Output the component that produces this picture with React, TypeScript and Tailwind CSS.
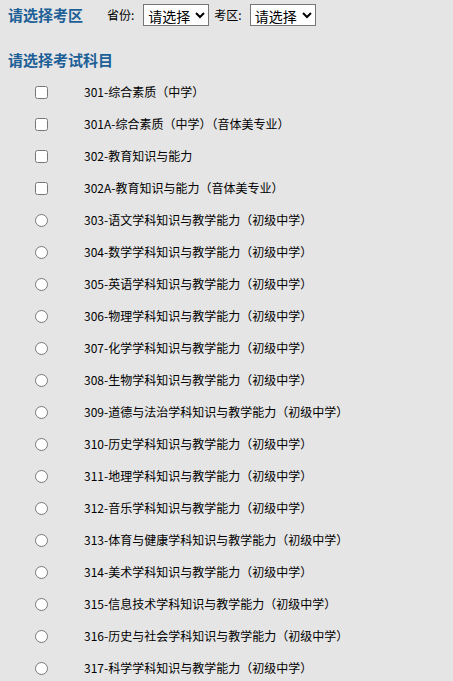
import React from "react";

const subjects: { label: string; multi?: boolean }[] = [
  { label: "301-综合素质（中学）", multi: true },
  { label: "301A-综合素质（中学）（音体美专业）", multi: true },
  { label: "302-教育知识与能力", multi: true },
  { label: "302A-教育知识与能力（音体美专业）", multi: true },
  { label: "303-语文学科知识与教学能力（初级中学）" },
  { label: "304-数学学科知识与教学能力（初级中学）" },
  { label: "305-英语学科知识与教学能力（初级中学）" },
  { label: "306-物理学科知识与教学能力（初级中学）" },
  { label: "307-化学学科知识与教学能力（初级中学）" },
  { label: "308-生物学科知识与教学能力（初级中学）" },
  { label: "309-道德与法治学科知识与教学能力（初级中学）" },
  { label: "310-历史学科知识与教学能力（初级中学）" },
  { label: "311-地理学科知识与教学能力（初级中学）" },
  { label: "312-音乐学科知识与教学能力（初级中学）" },
  { label: "313-体育与健康学科知识与教学能力（初级中学）" },
  { label: "314-美术学科知识与教学能力（初级中学）" },
  { label: "315-信息技术学科知识与教学能力（初级中学）" },
  { label: "316-历史与社会学科知识与教学能力（初级中学）" },
  { label: "317-科学学科知识与教学能力（初级中学）" },
];

const font = { fontFamily: '"Noto Sans CJK SC", "Liberation Sans", sans-serif' };

export default function App() {
  return (
    <div
      className="min-h-screen bg-[#e5e5e5] px-2 text-black"
      style={font}
    >
      {/* 考区 */}
      <div className="flex h-[30px] items-center">
        <span className="text-[15px] font-bold text-[#1d5f97]">请选择考区</span>
        <span className="ml-6 text-[12px]">省份:</span>
        <select className="ml-[9px] h-[22px] w-[66px] border border-[#767676] bg-white text-[14px]">
          <option>请选择</option>
        </select>
        <span className="ml-[5px] text-[12px]">考区:</span>
        <select className="ml-[8px] h-[22px] w-[66px] border border-[#767676] bg-white text-[14px]">
          <option>请选择</option>
        </select>
      </div>

      {/* 科目 */}
      <div className="mt-[14px] flex h-[32px] items-center">
        <span className="text-[15px] font-bold text-[#1d5f97]">请选择考试科目</span>
      </div>

      <ul>
        {subjects.map((s) => (
          <li key={s.label} className="flex h-[32px] items-center">
            <input
              type={s.multi ? "checkbox" : "radio"}
              name={s.multi ? undefined : "subject"}
              className="ml-[27px] h-[13px] w-[13px]"
            />
            <span className="ml-[36px] text-[12px]">{s.label}</span>
          </li>
        ))}
      </ul>
    </div>
  );
}
